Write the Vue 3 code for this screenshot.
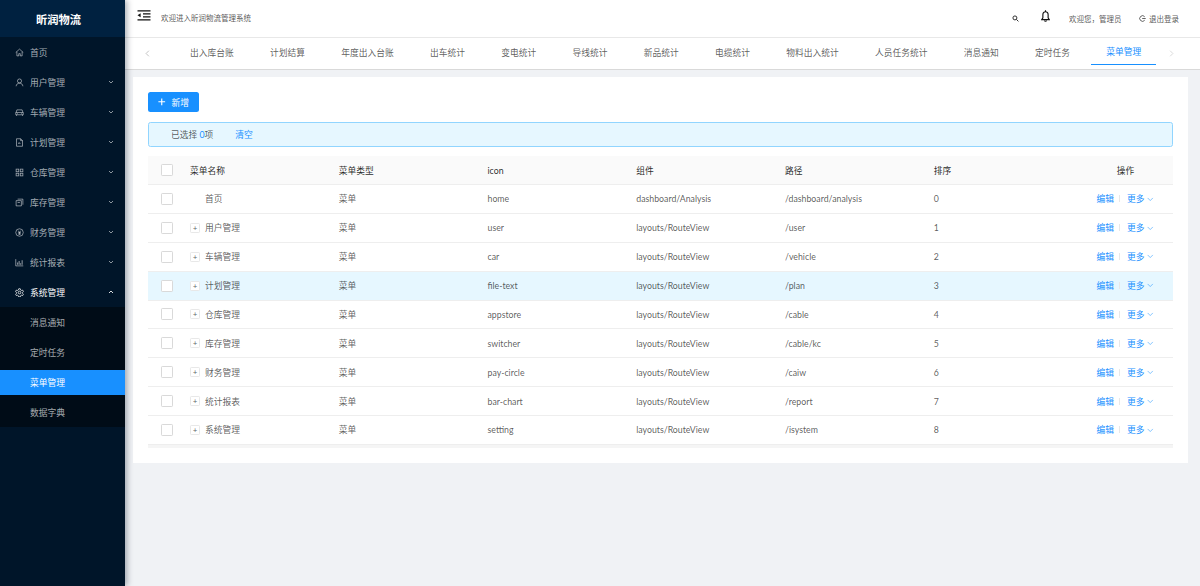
<template>
  <div class="layout">
    <aside class="sider">
      <div class="logo">昕润物流</div>
      <nav class="menu">
        <template v-for="item in menus" :key="item.title">
          <div class="menu-item" :class="{ open: item.open }">
            <svg class="menu-icon" viewBox="0 0 24 24" fill="none" stroke="currentColor" stroke-width="2" v-html="item.icon"></svg>
            <span class="menu-title">{{ item.title }}</span>
            <svg v-if="item.arrow" class="menu-arrow" viewBox="0 0 12 12" fill="none" stroke="currentColor" stroke-width="1.7">
              <path :d="item.open ? 'M2 8l4-4 4 4' : 'M2 4l4 4 4-4'" />
            </svg>
          </div>
          <div v-if="item.children" class="submenu">
            <div
              v-for="child in item.children"
              :key="child"
              class="submenu-item"
              :class="{ selected: child === '菜单管理' }"
            >{{ child }}</div>
          </div>
        </template>
      </nav>
    </aside>

    <div class="main">
      <header class="header">
        <svg class="fold" viewBox="0 0 14 11" fill="none" stroke="#111" stroke-width="1.2">
          <path d="M.5 .8h13M6 3.800h7.500M6 6.800h7.500M.5 9.800h13" />
          <path d="M3.600 3.300L.5 5.300l3.100 2z" fill="#111" stroke="none" />
        </svg>
        <span class="welcome">欢迎进入昕润物流管理系统</span>
        <div class="header-right">
          <svg class="search" viewBox="0 0 12 12" fill="none" stroke="#222" stroke-width="1.6">
            <circle cx="5" cy="5" r="3.400" />
            <path d="M7.600 7.600L11 11" />
          </svg>
          <svg class="bell" viewBox="0 0 12 16" fill="none" stroke="#111" stroke-width="1.500">
            <path d="M6 2.300c-2.300 0-3.500 1.700-3.500 4v4L1 12.800h10L9.500 10.300v-4C9.500 4 8.300 2.300 6 2.300zM6 .4v1.900M4.600 14.200c.4 1.100 2.400 1.100 2.800 0" />
          </svg>
          <span class="hello">欢迎您，管理员</span>
          <span class="logout">
            <svg viewBox="0 0 12 12" fill="none" stroke="#333" stroke-width="1.300">
              <path d="M9.800 3A4.800 4.800 0 1 0 9.800 9M5.500 6H11.500" />
            </svg>
            退出登录
          </span>
        </div>
      </header>

      <div class="tabs">
        <svg class="tab-arrow" viewBox="0 0 6 10" fill="none" stroke="#aaa" stroke-width="1"><path d="M5 1L1 5l4 4" /></svg>
        <div class="tab-list">
          <span v-for="tab in tabs" :key="tab" class="tab" :class="{ active: tab === '菜单管理' }">{{ tab }}</span>
        </div>
        <svg class="tab-arrow next" viewBox="0 0 6 10" fill="none" stroke="#ccc" stroke-width="1"><path d="M1 1l4 4-4 4" /></svg>
      </div>

      <div class="content">
        <section class="card">
          <button class="add-btn" type="button">
            <svg viewBox="0 0 10 10" fill="none" stroke="#fff" stroke-width="1.500"><path d="M5 .5v9M.5 5h9" /></svg>
            新增
          </button>

          <div class="alert">
            <span>已选择 <b>0</b>项</span>
            <a class="clear">清空</a>
          </div>

          <div class="table">
            <div class="row head">
              <div class="cell check"><i class="checkbox"></i></div>
              <div class="cell" v-for="col in columns" :key="col">{{ col }}</div>
              <div class="cell action">操作</div>
            </div>
            <div v-for="row in rows" :key="row.name" class="row" :class="{ hover: row.name === '计划管理' }">
              <div class="cell check"><i class="checkbox"></i></div>
              <div class="cell name">
                <i v-if="row.name !== '首页'" class="expand">+</i>
                <span :class="{ flat: row.name === '首页' }">{{ row.name }}</span>
              </div>
              <div class="cell">菜单</div>
              <div class="cell">{{ row.icon }}</div>
              <div class="cell">{{ row.comp }}</div>
              <div class="cell">{{ row.path }}</div>
              <div class="cell">{{ row.sort }}</div>
              <div class="cell links">
                <a>编辑</a>
                <i class="divider"></i>
                <a>更多</a>
                <svg viewBox="0 0 10 6" fill="none" stroke="#1890ff" stroke-width="0.800"><path d="M1 1l4 4 4-4" /></svg>
              </div>
            </div>
            <div class="table-foot"></div>
          </div>
        </section>
      </div>
    </div>
  </div>
</template>

<script setup>
const icons = {
  home: '<path d="M2 12L12 3l10 9M5 10v11h5v-6h4v6h5V10" />',
  user: '<circle cx="12" cy="8" r="5.500" /><path d="M3 22c.5-5 4-8.500 9-8.500s8.500 3.500 9 8.500" />',
  car: '<path d="M3 12l2-7h14l2 7M2 12h20v6H2zM4 18v3M20 18v3M6 15h2M16 15h2" />',
  file: '<path d="M4 2h11l5 5v15H4zM15 2v5h5M9 16l2-4 2 3 2-2" />',
  store: '<rect x="3" y="3" width="7" height="7" /><rect x="14" y="3" width="7" height="7" /><rect x="3" y="14" width="7" height="7" /><rect x="14" y="14" width="7" height="7" />',
  switcher: '<path d="M7 3h14v15M3 7h14v14H3zM7 12h6" />',
  pay: '<circle cx="12" cy="12" r="10" /><path d="M8.500 7l3.500 5 3.500-5M8 12.500h8M8 16h8M12 12v6" />',
  bar: '<path d="M2 3v18h20" /><path d="M7 18v-6M11 18V8M15 18v-4M19 18V6" stroke-width="2.400" />',
  setting: '<circle cx="12" cy="12" r="3.500" /><path d="M10 2h4l.8 3 2.600 1.500 3-.8 2 3.500-2.200 2.200v3l2.200 2.200-2 3.500-3-.8-2.600 1.500-.8 3h-4l-.8-3-2.600-1.500-3 .8-2-3.500 2.200-2.200v-3L1.600 9.200l2-3.500 3 .8L9.200 5z" />'
}

const menus = [
  { title: '首页', icon: icons.home },
  { title: '用户管理', icon: icons.user, arrow: true },
  { title: '车辆管理', icon: icons.car, arrow: true },
  { title: '计划管理', icon: icons.file, arrow: true },
  { title: '仓库管理', icon: icons.store, arrow: true },
  { title: '库存管理', icon: icons.switcher, arrow: true },
  { title: '财务管理', icon: icons.pay, arrow: true },
  { title: '统计报表', icon: icons.bar, arrow: true },
  {
    title: '系统管理',
    icon: icons.setting,
    arrow: true,
    open: true,
    children: ['消息通知', '定时任务', '菜单管理', '数据字典']
  }
]

const tabs = [
  '出入库台账', '计划结算', '年度出入台账', '出车统计', '变电统计', '导线统计', '新品统计',
  '电缆统计', '物料出入统计', '人员任务统计', '消息通知', '定时任务', '菜单管理'
]

const columns = ['菜单名称', '菜单类型', 'icon', '组件', '路径', '排序']

const rows = [
  { name: '首页', icon: 'home', comp: 'dashboard/Analysis', path: '/dashboard/analysis', sort: 0 },
  { name: '用户管理', icon: 'user', comp: 'layouts/RouteView', path: '/user', sort: 1 },
  { name: '车辆管理', icon: 'car', comp: 'layouts/RouteView', path: '/vehicle', sort: 2 },
  { name: '计划管理', icon: 'file-text', comp: 'layouts/RouteView', path: '/plan', sort: 3 },
  { name: '仓库管理', icon: 'appstore', comp: 'layouts/RouteView', path: '/cable', sort: 4 },
  { name: '库存管理', icon: 'switcher', comp: 'layouts/RouteView', path: '/cable/kc', sort: 5 },
  { name: '财务管理', icon: 'pay-circle', comp: 'layouts/RouteView', path: '/caiw', sort: 6 },
  { name: '统计报表', icon: 'bar-chart', comp: 'layouts/RouteView', path: '/report', sort: 7 },
  { name: '系统管理', icon: 'setting', comp: 'layouts/RouteView', path: '/isystem', sort: 8 }
]
</script>

<style scoped>
.layout {
  display: flex;
  height: 586px;
  overflow: hidden;
  font-family: Lato, "Noto Sans CJK SC", sans-serif;
  font-size: 8.75px;
  color: rgba(0, 0, 0, 0.65);
  background: #f0f2f5;
}

.sider {
  flex: 0 0 125px;
  background: #001529;
  box-shadow: 2px 0 6px rgba(0, 21, 41, 0.35);
  z-index: 2;
}

.logo {
  height: 37px;
  line-height: 39px;
  padding-right: 8px;
  text-align: center;
  background: #002140;
  color: #fff;
  font-size: 11.250px;
  font-weight: 700;
}

.menu {
  color: rgba(255, 255, 255, 0.65);
}

.menu-item {
  display: flex;
  align-items: center;
  height: 30px;
  padding: 0 10px 0 15px;
}

.menu-item.open {
  color: #fff;
}

.menu-icon {
  width: 9px;
  height: 9px;
  margin-right: 6px;
  flex: none;
}

.menu-title {
  flex: 1;
}

.menu-arrow {
  width: 6px;
  height: 6px;
  margin-right: 1px;
}

.submenu {
  background: #000c17;
  padding: 2.500px 0;
  color: rgba(255, 255, 255, 0.65);
}

.submenu-item {
  height: 25px;
  line-height: 25px;
  margin-bottom: 5px;
  padding-left: 30px;
}

.submenu-item:last-child {
  margin-bottom: 0;
}

.submenu-item.selected {
  background: #1890ff;
  color: #fff;
}

.main {
  flex: 1;
  min-width: 0;
  display: flex;
  flex-direction: column;
}

.header {
  display: flex;
  align-items: center;
  height: 37.500px;
  padding: 0 21px 0 12px;
  background: #fff;
  border-bottom: 1px solid #e8e8e8;
  box-sizing: border-box;
  color: rgba(0, 0, 0, 0.7);
}

.fold {
  width: 14px;
  height: 11px;
  margin: -6px 10px 0 0;
}

.welcome {
  font-size: 7.500px;
  margin-top: -2px;
}

.header-right {
  margin-left: auto;
  display: flex;
  align-items: center;
  font-size: 7.500px;
}

.search {
  width: 7px;
  height: 7px;
  margin-right: 22px;
}

.bell {
  width: 9px;
  height: 12px;
  margin: -4px 19px 0 0;
}

.hello {
  margin-right: 17.500px;
}

.logout {
  display: flex;
  align-items: center;
  gap: 3px;
}

.logout svg {
  width: 7px;
  height: 7px;
}

.tabs {
  display: flex;
  align-items: center;
  height: 32px;
  padding: 0 0 0 20px;
  background: #fff;
  border-bottom: 1px solid #d9d9d9;
  box-sizing: border-box;
}

.tab-arrow {
  width: 5px;
  height: 7px;
  flex: none;
}

.tab-arrow.next {
  margin-left: 13px;
}

.tab-list {
  display: flex;
  gap: 6.250px;
  height: 100%;
  margin-left: 25px;
}

.tab {
  display: flex;
  align-items: center;
  padding: 0 15px 1px;
  white-space: nowrap;
  box-sizing: border-box;
}

.tab.active {
  color: #1890ff;
  border-bottom: 1px solid #1890ff;
  height: 27px;
  padding-top: 2px;
}

.content {
  flex: 1;
  padding: 7.500px 12.500px 0 8px;
}

.card {
  background: #fff;
  padding: 15px 15px 15px;
}

.add-btn {
  display: flex;
  align-items: center;
  justify-content: center;
  gap: 6px;
  width: 51px;
  height: 20px;
  padding: 0;
  border: 0;
  border-radius: 2.500px;
  background: #1890ff;
  color: #fff;
  font: inherit;
}

.add-btn svg {
  width: 7.500px;
  height: 7.500px;
}

.alert {
  display: flex;
  align-items: center;
  gap: 22px;
  height: 25px;
  margin-top: 10px;
  padding-left: 22px;
  background: #e6f7ff;
  border: 1px solid #91d5ff;
  border-radius: 2.500px;
  box-sizing: border-box;
}

.alert b {
  font-weight: 400;
  color: #1890ff;
}

.clear {
  color: #1890ff;
}

.table {
  margin-top: 9px;
}

.row {
  display: grid;
  grid-template-columns: 34px repeat(6, 148.750px) 1fr;
  height: 28.875px;
  border-bottom: 1px solid #eee;
  box-sizing: border-box;
  align-items: center;
}

.row.hover {
  background: #e6f7ff;
}

.row.head {
  height: 29px;
  background: #fafafa;
  color: rgba(0, 0, 0, 0.85);
}

.cell {
  padding-left: 8px;
  white-space: nowrap;
}

.cell.check {
  padding-left: 13px;
  display: flex;
}

.checkbox {
  width: 10px;
  height: 10px;
  background: #fff;
  border: 1px solid #d9d9d9;
  border-radius: 1.250px;
}

.name {
  display: flex;
  align-items: center;
}

.expand {
  width: 10px;
  height: 10px;
  margin-right: 5px;
  border: 1px solid #e8e8e8;
  border-radius: 1.250px;
  background: #fff;
  box-sizing: border-box;
  font-style: normal;
  font-size: 8px;
  line-height: 8px;
  text-align: center;
}

.flat {
  margin-left: 15px;
}

.cell.action {
  padding: 0 0 0 4px;
  text-align: center;
}

.links {
  display: flex;
  align-items: center;
  justify-content: flex-end;
  padding: 0 19px 0 0;
  color: #1890ff;
}

.divider {
  width: 1px;
  height: 7px;
  margin: 0 7px 0 5px;
  background: #e8e8e8;
}

.links svg {
  width: 6.500px;
  height: 4.500px;
  margin-left: 2.500px;
}

.table-foot {
  height: 3.500px;
  background: #f5f5f5;
}
</style>

<style>
html,
body {
  margin: 0;
  background: #f0f2f5;
}
</style>
